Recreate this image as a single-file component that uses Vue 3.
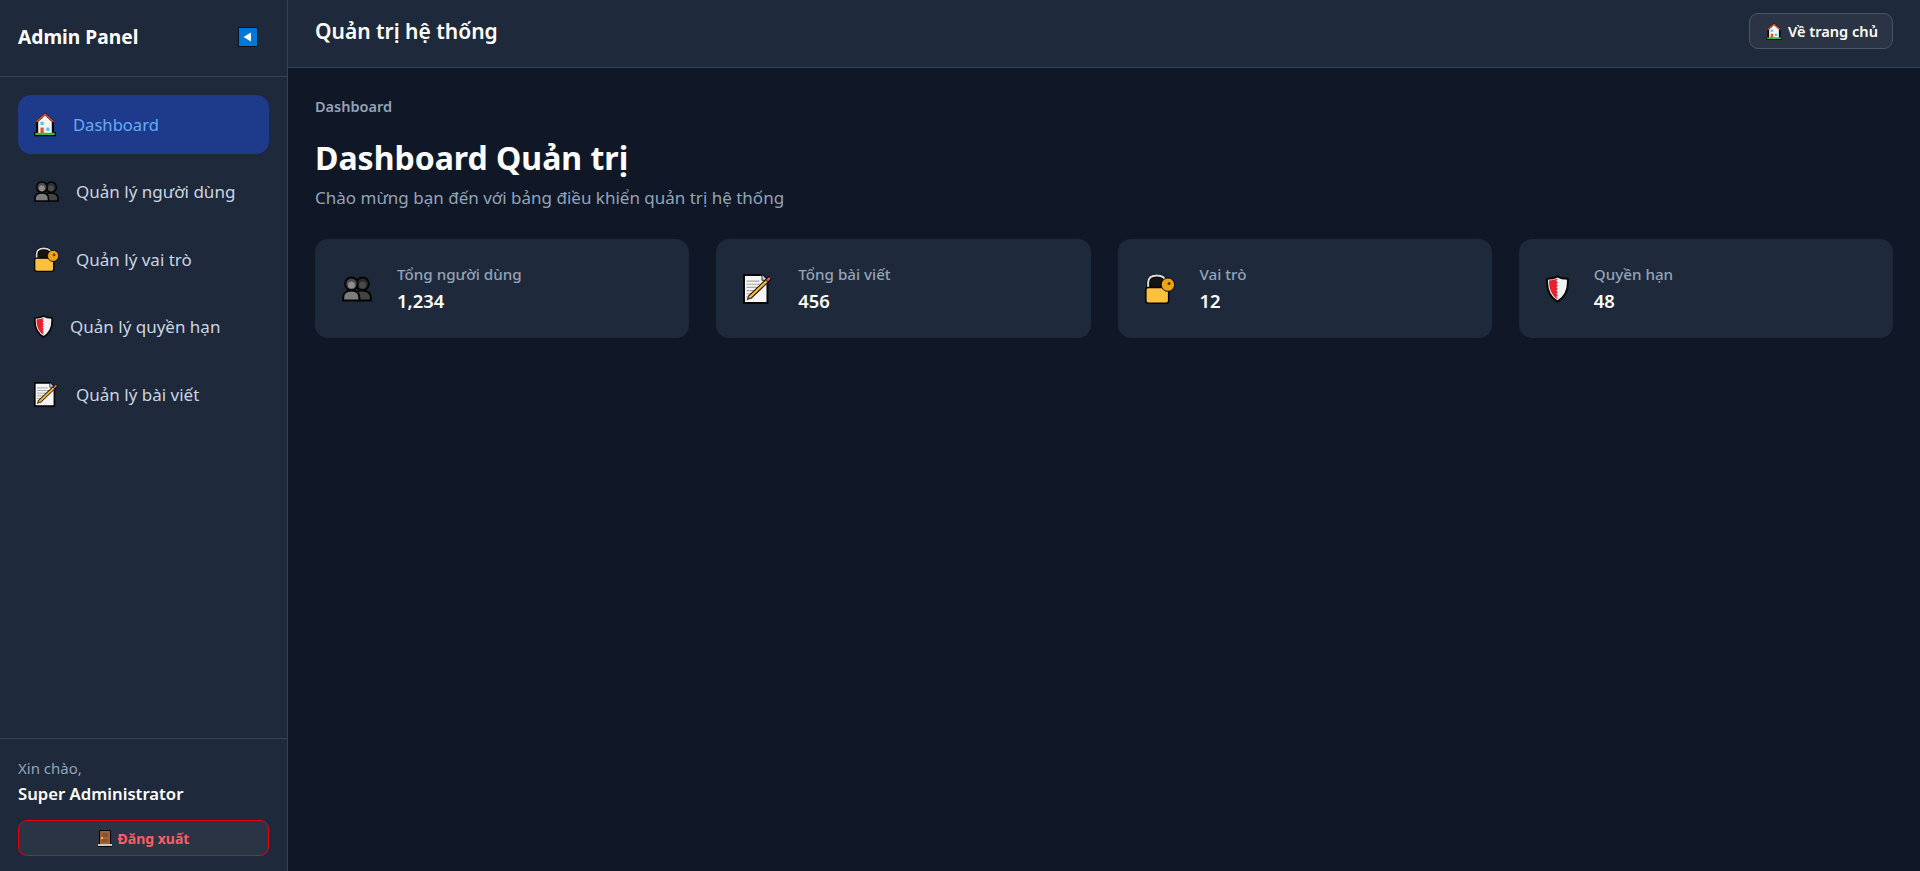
<template>
  <div class="layout">
    <svg class="icon-defs" xmlns="http://www.w3.org/2000/svg">
      <symbol id="ic-home" viewBox="0 0 68 73">
        <path d="M34 0 62 25V60H68V73H0V60H6V25Z" fill="#050505" />
        <path d="M34 9 55 28V63H13V28Z" fill="#f4f4f4" />
        <path d="M7 28 34 5 61 28" fill="none" stroke="#e2502e" stroke-width="5" />
        <rect x="20" y="28" width="10" height="10" fill="#4fc3f7" />
        <rect x="38" y="46" width="10" height="10" fill="#4fc3f7" />
        <rect x="20" y="46" width="10" height="20" fill="#e8502a" />
        <rect x="4" y="62" width="60" height="7" fill="#3fb83f" />
      </symbol>
      <symbol id="ic-users" viewBox="0 0 76 64">
        <path d="M38 61V40C42 37 46 36 50 36 66 36 73 44 73 54V61Z" fill="#444" stroke="#050505" stroke-width="5" />
        <circle cx="52" cy="19" r="16" fill="#2b2b2b" stroke="#050505" stroke-width="5" />
        <circle cx="52" cy="22" r="9" fill="#4a4a4a" />
        <path d="M3 61V54C3 44 10 36 24 36 38 36 44 44 44 54V61Z" fill="#7c7c7c" stroke="#050505" stroke-width="5" />
        <circle cx="24" cy="19" r="16" fill="#4a4a4a" stroke="#050505" stroke-width="5" />
        <circle cx="24" cy="22" r="9" fill="#8d8d8d" />
      </symbol>
      <symbol id="ic-lock" viewBox="0 0 76 76">
        <path d="M8 40V22C8 8 18 4 30 4 42 4 52 8 52 22V40Z" fill="#141414" />
        <path d="M8 38V22C8 8 18 4 30 4 42 4 52 8 52 22V38" fill="none" stroke="#050505" stroke-width="8" />
        <path d="M8 38V22C8 8 18 4 30 4 42 4 52 8 52 22" fill="none" stroke="#dcdcdc" stroke-width="5" />
        <rect x="2" y="34" width="58" height="40" rx="6" fill="#fbc13c" stroke="#050505" stroke-width="4" />
        <circle cx="58" cy="27" r="17" fill="#eda512" stroke="#050505" stroke-width="2.500" />
        <circle cx="61" cy="24" r="4" fill="#5a3c00" />
      </symbol>
      <symbol id="ic-shield" viewBox="0 0 58 70">
        <path d="M29 3C37 8 46 9 55 9 57 32 50 55 29 67 8 55 1 32 3 9 12 9 21 8 29 3Z" fill="#f1f1f1" stroke="#050505" stroke-width="5" />
        <path d="M29 8C23 12 15 13 8 13 7 32 13 50 29 61L29 58 26 55 30 51 26 47 30 43 26 39 30 35 26 31 30 27 26 23 30 19 26 15Z" fill="#e8202c" />
      </symbol>
      <symbol id="ic-memo" viewBox="0 0 76 76">
        <path d="M2.500 2.500H48L62 16V73.500H2.500Z" fill="#f5f5f5" stroke="#050505" stroke-width="5" />
        <path d="M48 2V16H62" fill="#cfcfcf" stroke="#050505" stroke-width="2" />
        <path d="M9 18H42M9 26H50M9 34H50M9 42H34M9 50H26M9 58H20" stroke="#a8a8a8" stroke-width="3" />
        <path d="M16 60 62 16" stroke="#050505" stroke-width="11" />
        <path d="M16 60 60 18" stroke="#f9b233" stroke-width="6" />
        <path d="M61 17 69 9" stroke="#050505" stroke-width="11" />
        <path d="M61 17 68 10" stroke="#d9606a" stroke-width="6" />
        <path d="M9 67 12 57 19 63Z" fill="#403a30" />
      </symbol>
      <symbol id="ic-door" viewBox="0 0 14 17">
        <rect x="1" y="0" width="12" height="15" fill="#050505" />
        <rect x="2" y="1" width="10" height="13" fill="#a0623a" />
        <path d="M4 3H10V7H4ZM4 9H10V12H4Z" fill="#8a5230" />
        <rect x="3" y="7" width="2" height="2" fill="#e8b64a" />
        <rect x="0" y="14" width="14" height="3" fill="#c9c9c9" />
        <rect x="0" y="16" width="14" height="1" fill="#050505" />
      </symbol>
    </svg>

    <aside class="sidebar">
      <div class="sidebar-header">
        <span class="brand">Admin Panel</span>
        <svg class="collapse" viewBox="0 0 20 20">
          <rect x="0.5" y="0.5" width="19" height="19" fill="#0078d7" stroke="#0b1320" />
          <path d="M5.500 10 13 5.500V14.500Z" fill="#fff" />
        </svg>
      </div>

      <nav class="nav">
        <a
          v-for="item in navItems"
          :key="item.label"
          class="nav-item"
          :class="{ active: item.active }"
        >
          <svg :class="['nav-icon', item.icon]"><use :href="`#ic-${item.icon}`" /></svg>
          <span>{{ item.label }}</span>
        </a>
      </nav>

      <div class="sidebar-footer">
        <div class="hello">Xin chào,</div>
        <div class="user-name">Super Administrator</div>
        <button class="btn-logout">
          <svg class="door"><use href="#ic-door" /></svg>
          Đăng xuất
        </button>
      </div>
    </aside>

    <div class="main">
      <header class="topbar">
        <h2 class="topbar-title">Quản trị hệ thống</h2>
        <button class="btn-home">
          <svg class="home-small"><use href="#ic-home" /></svg>
          Về trang chủ
        </button>
      </header>

      <main class="content">
        <div class="breadcrumb">Dashboard</div>
        <h1 class="page-title">Dashboard Quản trị</h1>
        <p class="page-sub">Chào mừng bạn đến với bảng điều khiển quản trị hệ thống</p>

        <div class="stats">
          <div v-for="stat in stats" :key="stat.label" class="stat-card">
            <svg :class="['stat-icon', stat.icon]"><use :href="`#ic-${stat.icon}`" /></svg>
            <div>
              <div class="stat-label">{{ stat.label }}</div>
              <div class="stat-value">{{ stat.value }}</div>
            </div>
          </div>
        </div>
      </main>
    </div>
  </div>
</template>

<script setup>
const navItems = [
  { label: 'Dashboard', icon: 'home', active: true },
  { label: 'Quản lý người dùng', icon: 'users' },
  { label: 'Quản lý vai trò', icon: 'lock' },
  { label: 'Quản lý quyền hạn', icon: 'shield' },
  { label: 'Quản lý bài viết', icon: 'memo' }
]

const stats = [
  { label: 'Tổng người dùng', value: '1,234', icon: 'users' },
  { label: 'Tổng bài viết', value: '456', icon: 'memo' },
  { label: 'Vai trò', value: '12', icon: 'lock' },
  { label: 'Quyền hạn', value: '48', icon: 'shield' }
]
</script>

<style>
body {
  margin: 0;
  background: #101827;
}
</style>

<style scoped>
.layout {
  display: flex;
  height: 100vh;
  font-family: "Noto Sans", "Open Sans", sans-serif;
  color: #fff;
  background: #101827;
  overflow: hidden;
}

.icon-defs {
  display: none;
}

.sidebar {
  box-sizing: border-box;
  width: 288px;
  flex-shrink: 0;
  display: flex;
  flex-direction: column;
  background: #1e293b;
  border-right: 1px solid #334155;
}

.sidebar-header {
  box-sizing: border-box;
  height: 77px;
  padding: 0 29px 2px 18px;
  display: flex;
  align-items: center;
  justify-content: space-between;
  border-bottom: 1px solid #334155;
}

.brand {
  margin-top: -2px;
  font-size: 19.2px;
  font-weight: 700;
}

.collapse {
  width: 20px;
  height: 20px;
}

.nav {
  flex: 1;
  padding: 18px;
  display: flex;
  flex-direction: column;
  gap: 9px;
}

.nav-item {
  height: 58.5px;
  padding: 0 16px;
  display: flex;
  align-items: center;
  gap: 17px;
  border-radius: 13px;
  font-size: 17px;
  color: #cbd5e1;
}

.nav-item.active {
  background: #1e3a8a;
  color: #68aaf8;
  font-size: 16.6px;
}

.nav-icon {
  height: 25px;
  flex-shrink: 0;
}

.nav-icon.home { width: 22px; }
.nav-icon.users { width: 25px; }
.nav-icon.lock { width: 25px; }
.nav-icon.shield { width: 19px; }
.nav-icon.memo { width: 25px; }

.sidebar-footer {
  box-sizing: border-box;
  height: 133px;
  padding: 18px 18px 15px;
  border-top: 1px solid #334155;
}

.hello {
  font-size: 15px;
  color: #94a3b8;
  line-height: 22px;
}

.user-name {
  margin-top: 3px;
  font-size: 16.7px;
  font-weight: 600;
  line-height: 24px;
}

.btn-logout {
  width: 100%;
  height: 36px;
  margin-top: 14px;
  display: flex;
  align-items: center;
  justify-content: center;
  gap: 6px;
  border: 1px solid #e7000b;
  border-radius: 9px;
  background: #2a3444;
  color: #fb5c68;
  font-family: inherit;
  font-size: 14px;
  font-weight: 700;
}

.door {
  width: 14px;
  height: 17px;
}

.main {
  flex: 1;
  min-width: 0;
  display: flex;
  flex-direction: column;
}

.topbar {
  box-sizing: border-box;
  height: 68px;
  padding: 0 27px 5px;
  display: flex;
  align-items: center;
  justify-content: space-between;
  background: #1e293b;
  border-bottom: 1px solid #334155;
}

.topbar-title {
  margin: 0;
  font-size: 21px;
  font-weight: 600;
}

.btn-home {
  height: 36px;
  padding: 0 14px 0 16px;
  display: flex;
  align-items: center;
  gap: 6px;
  border: 1px solid #475569;
  border-radius: 9px;
  background: #2a3444;
  color: #fff;
  font-family: inherit;
  font-size: 14.6px;
  font-weight: 600;
}

.home-small {
  width: 16px;
  height: 17px;
}

.content {
  flex: 1;
  padding: 27px;
}

.breadcrumb {
  font-size: 14.5px;
  font-weight: 600;
  line-height: 22px;
  color: #94a3b8;
}

.page-title {
  margin: 21px 0 0;
  font-size: 32px;
  font-weight: 700;
  line-height: 40px;
}

.page-sub {
  margin: 8px 0 0;
  font-size: 17px;
  line-height: 24px;
  color: #94a3b8;
}

.stats {
  margin-top: 29px;
  display: grid;
  grid-template-columns: repeat(4, 1fr);
  gap: 27px;
}

.stat-card {
  height: 99px;
  padding: 0 27px;
  display: flex;
  align-items: center;
  gap: 25px;
  background: #1e293b;
  border-radius: 13px;
}

.stat-icon {
  height: 30px;
  flex-shrink: 0;
}

.stat-icon.users { width: 30px; }
.stat-icon.memo { width: 30px; }
.stat-icon.lock { width: 30px; }
.stat-icon.shield { width: 23px; }

.stat-label {
  margin-top: -2px;
  font-size: 15.2px;
  font-weight: 500;
  line-height: 22px;
  color: #94a3b8;
}

.stat-value {
  margin-top: 3px;
  font-size: 18.4px;
  font-weight: 600;
  line-height: 25px;
}
</style>
